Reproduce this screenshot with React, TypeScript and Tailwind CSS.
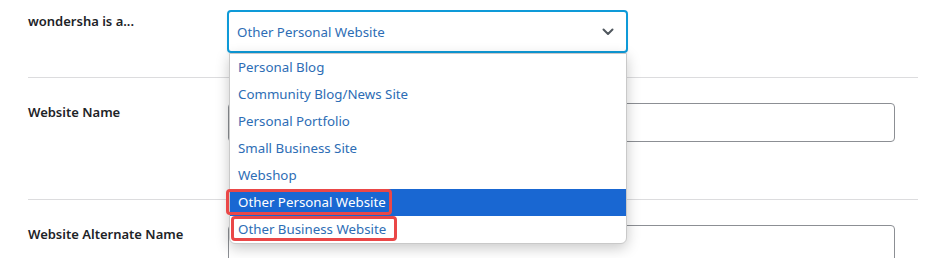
import React from "react";

const options = [
  "Personal Blog",
  "Community Blog/News Site",
  "Personal Portfolio",
  "Small Business Site",
  "Webshop",
  "Other Personal Website",
  "Other Business Website",
];

export default function App() {
  return (
    <div className="relative w-[940px] h-[258px] overflow-hidden bg-white font-['Noto_Sans',sans-serif] text-[13.3px] text-[#1d2327]">
      <div className="pl-[28px] w-[918px]">
        {/* Row 1 */}
        <div className="flex h-[78px] border-b border-[#dcdcde]">
          <div className="w-[199px] pt-[11px] text-[13px] font-semibold leading-5">wondersha is a...</div>
          <div className="relative mt-[10px] h-[43px] w-[401px]">
            <div className="flex h-full items-center justify-between rounded-[4px] border-2 border-[#0e9ad8] pl-[8px] pr-[12px] text-[#2d6db5] shadow-[0_2px_3px_rgba(0,0,0,0.06)]">
              <span className="leading-5">Other Personal Website</span>
              <svg width="12" height="8" viewBox="0 0 12 8" fill="none">
                <path d="M1.5 1.5 L6 6 L10.5 1.5" stroke="#50575e" strokeWidth="2" strokeLinecap="round" strokeLinejoin="round" />
              </svg>
            </div>
            {/* Dropdown list */}
            <div className="absolute left-[2px] top-[43px] z-10 w-[398px] rounded-b-[6px] border border-[#c9c9c9] bg-white shadow-[0_4px_14px_rgba(0,0,0,0.22)]">
              {options.map((o, i) => (
                <div
                  key={o}
                  className={
                    i === 5
                      ? "flex h-[27px] items-center bg-[#1967d2] pb-[2px] pl-[8px] text-white"
                      : "flex h-[27px] items-center pb-[2px] pl-[8px] text-[#2d6db5]"
                  }
                >
                  <span className="leading-5">{o}</span>
                </div>
              ))}
              <div className="absolute left-[-4px] top-[135px] h-[26px] w-[166px] rounded-[4px] border-[3px] border-[#ea4747]" />
              <div className="absolute left-[1px] top-[162px] h-[25px] w-[166px] rounded-[4px] border-[3px] border-[#ea4747]" />
            </div>
          </div>
        </div>
        {/* Row 2 */}
        <div className="flex h-[122px] border-b border-[#dcdcde]">
          <div className="w-[200px] pt-[24px] text-[13px] font-semibold leading-5">Website Name</div>
          <div className="mt-[25px] h-[39px] w-[667px] rounded-[4px] border border-[#8c8f94] bg-white" />
        </div>
        {/* Row 3 */}
        <div className="flex">
          <div className="w-[200px] pt-[24px] text-[13px] font-semibold leading-5">Website Alternate Name</div>
          <div className="mt-[25px] h-[39px] w-[667px] rounded-[4px] border border-[#8c8f94] bg-white" />
        </div>
      </div>
    </div>
  );
}
